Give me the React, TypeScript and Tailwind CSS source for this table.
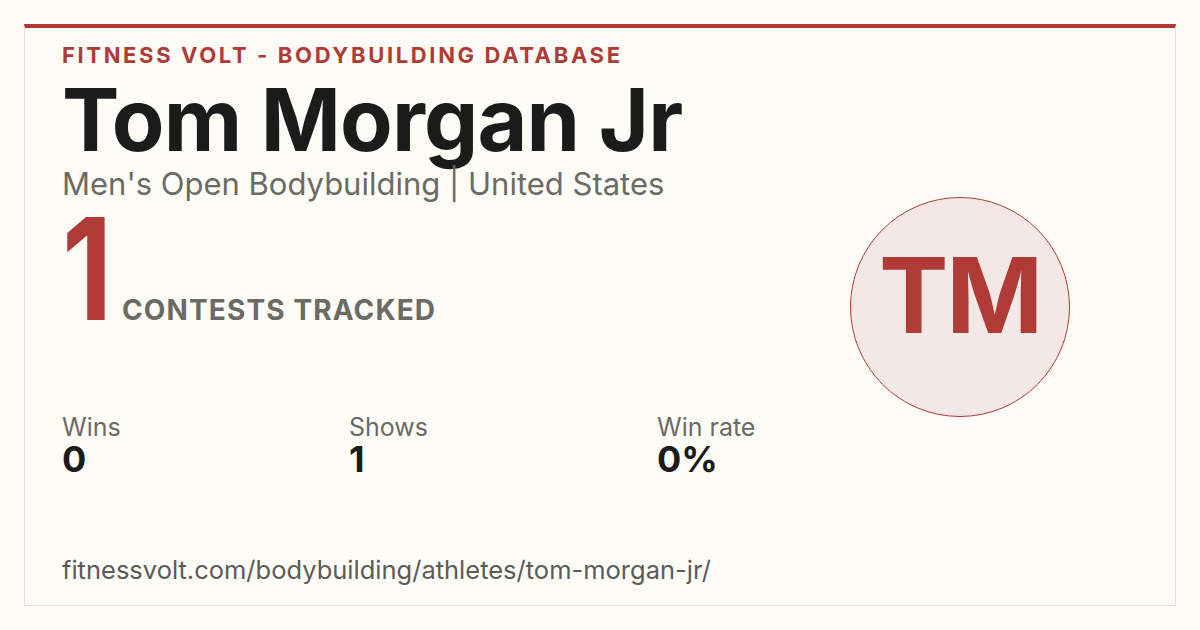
const stats = [
  { label: 'Wins', value: '0', width: 'w-[287px]' },
  { label: 'Shows', value: '1', width: 'w-[308px]' },
  { label: 'Win rate', value: '0%', width: 'flex-1' },
]

export default function App() {
  return (
    <div className="w-[1200px] h-[630px] bg-[#fdfcf7] p-6 font-['Inter','Liberation_Sans',sans-serif]">
      <div className="h-full flex border border-[#e4e2db] border-t-4 border-t-[#b03a35] pl-[37px] pr-[105px]">
        {/* left column */}
        <div className="flex-1 min-w-0 flex flex-col">
          <div className="mt-[12px] text-[22px] leading-[30px] font-bold tracking-[0.12em] text-[#b03a35]">
            FITNESS VOLT - BODYBUILDING DATABASE
          </div>
          <h1 className="mt-[4px] text-[86px] leading-[92px] font-bold tracking-[-0.01em] text-[#1b1b1b]">
            Tom Morgan Jr
          </h1>
          <div className="mt-[1px] text-[31px] leading-[34px] text-[#6b6a64]">
            Men's Open Bodybuilding | United States
          </div>
          <div className="mt-[5px] flex items-baseline h-[124px]">
            <span className="w-[60px] inline-block origin-left scale-x-[0.82] text-[142px] leading-[124px] font-bold text-[#b03a35] tracking-[-0.1em]">1</span>
            <span className="text-[28px] leading-[30px] font-bold tracking-[0.04em] text-[#6b6a64]">
              CONTESTS TRACKED
            </span>
          </div>
          <div className="flex mt-[83px]">
            {stats.map(s => (
              <div key={s.label} className={s.width}>
                <div className="text-[25px] leading-[28px] text-[#6b6a64]">{s.label}</div>
                <div className="text-[36px] leading-[36px] font-bold text-[#1b1b1b]">{s.value}</div>
              </div>
            ))}
          </div>
          <div className="mt-auto mb-[20px] text-[25.5px] leading-[30px] text-[#5c5b57]">
            fitnessvolt.com/bodybuilding/athletes/tom-morgan-jr/
          </div>
        </div>

        {/* avatar */}
        <div className="flex items-center pb-[20px]">
          <div className="w-[220px] h-[220px] rounded-full border-[1.5px] border-[#b03a35] bg-[#f4e8e6] flex items-center justify-center">
            <span className="mb-[24px] text-[104px] leading-none font-bold text-[#b03a35] tracking-[-0.02em]">TM</span>
          </div>
        </div>
      </div>
    </div>
  )
}
